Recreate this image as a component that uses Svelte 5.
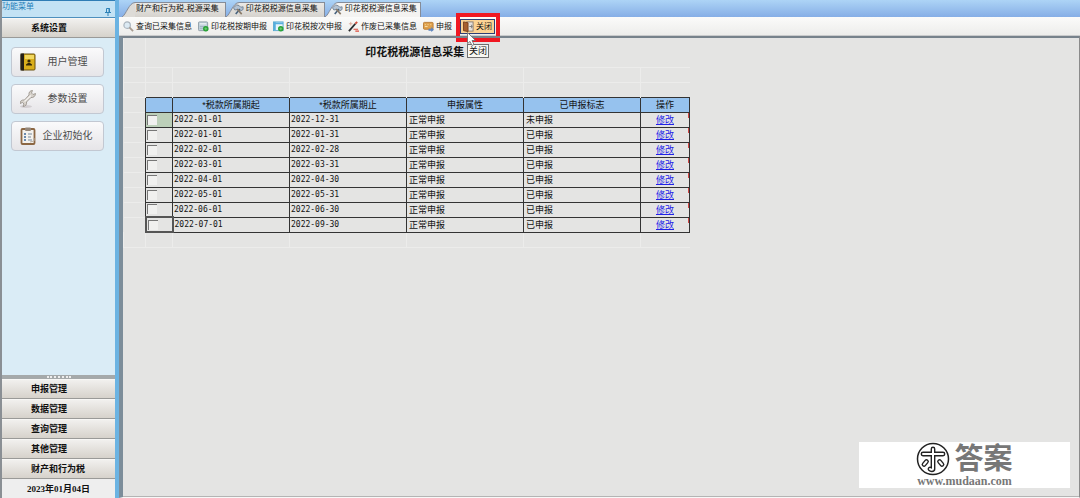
<script lang="ts">
  type Row = { start: string; end: string; kind: string; flag: string; checked: boolean };

  const tabs = [
    { title: '财产和行为税-税源采集', icon: false },
    { title: '印花税税源信息采集', icon: true },
    { title: '印花税税源信息采集', icon: true }
  ];
  let activeTab = $state(2);

  const menus = [
    { label: '用户管理', icon: 'book' },
    { label: '参数设置', icon: 'wrench' },
    { label: '企业初始化', icon: 'clipboard' }
  ];

  const groups = ['申报管理', '数据管理', '查询管理', '其他管理', '财产和行为税'];

  const tools = [
    { label: '查询已采集信息', icon: 'search' },
    { label: '印花税按期申报', icon: 'period' },
    { label: '印花税按次申报', icon: 'once' },
    { label: '作废已采集信息', icon: 'wand' },
    { label: '申报', icon: 'send' }
  ];

  const columns = ['*税款所属期起', '*税款所属期止', '申报属性', '已申报标志', '操作'];

  const rows: Row[] = $state(
    [
      ['2022-01-01', '2022-12-31', '未申报'],
      ['2022-01-01', '2022-01-31', '已申报'],
      ['2022-02-01', '2022-02-28', '已申报'],
      ['2022-03-01', '2022-03-31', '已申报'],
      ['2022-04-01', '2022-04-30', '已申报'],
      ['2022-05-01', '2022-05-31', '已申报'],
      ['2022-06-01', '2022-06-30', '已申报'],
      ['2022-07-01', '2022-09-30', '已申报']
    ].map(([start, end, flag]) => ({ start, end, flag, kind: '正常申报', checked: false }))
  );
</script>

{#snippet icon(name: string)}
  {#if name === 'book'}
    <svg class="menu-icon" viewBox="0 0 16 18">
      <rect x="1" y="1" width="14" height="16" rx="1" fill="#d9ae1c" stroke="#6b5310" />
      <rect x="0.5" y="0.5" width="3.5" height="17" fill="#252018" />
      <rect x="5" y="2" width="9" height="4" fill="#f2d860" />
      <circle cx="9" cy="8" r="1.6" fill="#322708" />
      <path d="M6 12.5h6v-1l-2-1.5h-2l-2 1.5z" fill="#322708" />
    </svg>
  {:else if name === 'wrench'}
    <svg class="menu-icon" viewBox="0 0 16 18">
      <ellipse cx="6" cy="16.5" rx="6" ry="1.5" fill="#d2ced1" />
      <path d="M15.500 3.500l-2.500 1-1.500-1.500 1-2.500c-2.500 0-4 2-3.500 4.500L4.500 10c-2.500-.5-4.500 1-4.500 3.500l2.500-1 1.500 1.500-1 2.500c2.500 0 4-2 3.500-4.500L11 7.500c2.500.5 4.500-1.500 4.500-4z" fill="#d6d1ca" stroke="#938d85" stroke-width="0.8" />
      <path d="M4.500 11.500l6.500-6" stroke="#f4f2ef" stroke-width="1.2" />
    </svg>
  {:else if name === 'clipboard'}
    <svg class="menu-icon" viewBox="0 0 16 18">
      <rect x="1.5" y="2" width="13" height="15" rx="1" fill="#f4f2ee" stroke="#8c6743" stroke-width="1.8" />
      <rect x="5" y="0.5" width="6" height="3.5" rx="1" fill="#94877b" />
      <path d="M4 7h2m-2 3h2m-2 3h2" stroke="#3e699b" stroke-width="1.5" />
      <path d="M8 7h4m-4 3h3m-3 3h4" stroke="#77899c" />
      <path d="M10 15l4-1v-3" fill="none" stroke="#b9b0a5" />
    </svg>
  {:else if name === 'search'}
    <svg class="tool-icon" viewBox="0 0 12 12">
      <circle cx="4.5" cy="4.5" r="3.5" fill="#dceaf3" stroke="#a9b3bc" stroke-width="1.3" />
      <path d="M7 7l4 4" stroke="#a79b90" stroke-width="2" />
    </svg>
  {:else if name === 'period'}
    <svg class="tool-icon" viewBox="0 0 12 12">
      <rect x="0.5" y="1" width="10" height="9.5" rx="1" fill="#c3d2dc" stroke="#8c9ba5" />
      <path d="M2 3h7" stroke="#e8eef2" stroke-width="1.5" />
      <path d="M2 6h7M2 8h5" stroke="#9fb3c1" />
      <circle cx="8.5" cy="8.5" r="3" fill="#28a336" />
      <path d="M8.5 7v3M7 8.5h3" stroke="#79cf7c" />
    </svg>
  {:else if name === 'once'}
    <svg class="tool-icon" viewBox="0 0 12 12">
      <rect x="0.5" y="1" width="10.5" height="9.5" fill="#e8f4fa" stroke="#58a9cf" />
      <path d="M1 2.5h10M2 1v9" stroke="#57aede" stroke-width="2" />
      <circle cx="8.5" cy="8.5" r="3" fill="#28a336" />
      <path d="M8.5 7v3M7 8.5h3" stroke="#79cf7c" />
    </svg>
  {:else if name === 'wand'}
    <svg class="tool-icon" viewBox="0 0 12 12">
      <path d="M1 11l7-8" stroke="#292b2d" stroke-width="2" />
      <path d="M8 3l2-2" stroke="#d04b3b" stroke-width="2" />
      <path d="M3 1v4M1 3h4" stroke="#d79a88" stroke-width="0.8" />
      <path d="M6 9h5M8 11h4" stroke="#dc4838" stroke-width="1.3" />
    </svg>
  {:else if name === 'send'}
    <svg class="tool-icon" viewBox="0 0 12 12">
      <rect x="0.5" y="1.5" width="10.5" height="7.5" rx="1" fill="#dfa14c" stroke="#b87a32" />
      <path d="M2 4h1m2 0h1m2 0h1M2 6h3" stroke="#fae1ad" />
      <path d="M6 8.5h3v-2l3 3-3 2.500v-1.500H6z" fill="#5f85bd" />
    </svg>
  {:else if name === 'door'}
    <svg class="tool-icon" viewBox="0 0 12 12">
      <rect x="4" y="1" width="7" height="10" fill="#e9e4df" stroke="#857970" />
      <path d="M0.5 1l5 1v9.5l-5-1z" fill="#a8602f" stroke="#79401b" />
      <path d="M7 6h3m-1-2l1 2-1 2" fill="none" stroke="#777" />
    </svg>
  {:else if name === 'tab'}
    <svg class="tool-icon" viewBox="0 0 12 12">
      <path d="M0.5 4l3.500-3 3 1 1.500 1.500L11 3v3L8.500 7.500 5 6 2 6.500z" fill="#b3c3d4" stroke="#5f7286" stroke-width="0.8" />
      <path d="M3 11l4.500-5.500" stroke="#48647f" stroke-width="1.8" />
      <path d="M4.500 5.500l5 5.500" stroke="#8a7a68" stroke-width="1.8" />
    </svg>
  {/if}
{/snippet}

<div class="app">
  <aside class="sidebar">
    <div class="panel-title">
      <span>功能菜单</span>
      <svg class="pin" viewBox="0 0 6 8">
        <path d="M1.5 0.5h3v4h-3zM0 4.500h6M3 4.500V8" fill="none" stroke="#2e82b8" />
        <path d="M4 0v4" stroke="#2e82b8" />
      </svg>
    </div>
    <button type="button" class="group">系统设置</button>
    <div class="menu">
      {#each menus as item}
        <button type="button" class="menu-item">
          {@render icon(item.icon)}
          <span>{item.label}</span>
        </button>
      {/each}
    </div>
    <div class="splitter"><i></i></div>
    {#each groups as group}
      <button type="button" class="group">{group}</button>
    {/each}
    <div class="date">2023年01月04日</div>
  </aside>

  <main class="main">
    <div class="tabs">
      {#each tabs as tab, i}
        <button type="button" class="tab" class:active={i === activeTab} onclick={() => (activeTab = i)}>
          <svg class="slope" viewBox="0 0 13 15">
            <path class="slope-fill" d="M0 15C4 13 7 0.5 13 0.5V15z" />
            <path d="M0 15C4 13 7 0.5 13 0.5" fill="none" stroke="#858c98" />
          </svg>
          <span class="tab-body" class:with-icon={tab.icon}>
            {#if tab.icon}{@render icon('tab')}{/if}
            {tab.title}
          </span>
        </button>
      {/each}
    </div>

    <div class="toolbar">
      {#each tools as tool}
        <button type="button" class="tool">
          {@render icon(tool.icon)}
          {tool.label}
        </button>
      {/each}
      <div class="close-wrap">
        <button type="button" class="tool close">
          {@render icon('door')}
          关闭
        </button>
        <span class="marker"></span>
        <span class="tooltip">关闭</span>
        <svg class="cursor" viewBox="0 0 9 14">
          <path d="M0.5 0.5v11l2.500-2 2 4 2-1-2-4h3.500z" fill="#fff" stroke="#666" stroke-width="0.8" />
        </svg>
      </div>
    </div>

    <div class="content">
      <table class="sheet">
        <colgroup>
          <col class="col-gutter" />
          <col class="col-check" />
          <col class="col-data" />
          <col class="col-data" />
          <col class="col-data" />
          <col class="col-data" />
          <col class="col-action" />
        </colgroup>
        <thead>
          <tr class="title-row">
            <td></td>
            <th colspan="6">印花税税源信息采集</th>
          </tr>
          {#each [0, 1] as _}
            <tr class="blank">
              {#each Array(7) as _}<td></td>{/each}
            </tr>
          {/each}
          <tr class="head">
            <td class="gutter"></td>
            <th></th>
            {#each columns as column}
              <th>{column}</th>
            {/each}
          </tr>
        </thead>
        <tbody>
          {#each rows as row, i}
            <tr class="data">
              <td class="gutter"></td>
              <td class="check" class:current={i === 0} class:focused={i === rows.length - 1}>
                <input type="checkbox" aria-label="选择 {row.start}" bind:checked={row.checked} />
              </td>
              <td class="day">{row.start}</td>
              <td class="day">{row.end}</td>
              <td>{row.kind}</td>
              <td>{row.flag}</td>
              <td class="action"><a href="#edit">修改</a></td>
            </tr>
          {/each}
        </tbody>
        <tfoot>
          <tr class="blank last">
            {#each Array(7) as _}<td></td>{/each}
          </tr>
        </tfoot>
      </table>

      <div class="watermark">
        <div class="brand">
          <svg class="logo" viewBox="0 0 34 34">
            <circle cx="17" cy="17" r="15.5" fill="#fff" stroke="#222" stroke-width="1.5" />
            <g fill="none" stroke-linecap="round" stroke-linejoin="round">
              <path d="M7 12h20M17 7v20c0 1-2 1-3 0M10.500 19.500l-2.500 3M23.500 19.500l2.500 3" stroke="#222" stroke-width="4.8" />
              <path d="M7 12h20M17 7v20c0 1-2 1-3 0M10.500 19.500l-2.500 3M23.500 19.500l2.500 3" stroke="#fff" stroke-width="2" />
            </g>
          </svg>
          <span>答案</span>
        </div>
        <div class="site">www.mudaan.com</div>
      </div>
    </div>
  </main>
</div>

<style>
  :global(body) {
    margin: 0;
  }

  .app {
    display: flex;
    min-height: 100vh;
    font-family: "Liberation Sans", "Noto Sans CJK SC", sans-serif;
    font-size: 8px;
    line-height: 12px;
    color: #111;
    background: #e4e4e3;
  }

  button {
    font: inherit;
    color: inherit;
    margin: 0;
    padding: 0;
    border: none;
    background: none;
    white-space: nowrap;
  }

  svg {
    display: block;
    flex-shrink: 0;
  }

  /* sidebar */
  .sidebar {
    box-sizing: border-box;
    width: 119px;
    flex-shrink: 0;
    display: flex;
    flex-direction: column;
    border-left: 2px solid #8a8f94;
    border-right: 4px solid #6bb3e2;
    background: #daecf6;
  }

  .panel-title {
    box-sizing: border-box;
    height: 18px;
    display: flex;
    justify-content: space-between;
    border-top: 1px solid #2f7db5;
    border-bottom: 1px solid #4e8fbd;
    background: #c3e2f4;
    color: #2580b9;
  }

  .pin {
    width: 6px;
    height: 8px;
    margin: 7px 4px 0 0;
  }

  .group {
    box-sizing: border-box;
    height: 20px;
    padding-left: 29px;
    text-align: left;
    font-size: 9px;
    font-weight: bold;
    border-top: 1px solid #f8f7f5;
    border-bottom: 1px solid #9a9a98;
    background: linear-gradient(#f1f0ee, #d6d2cb);
  }

  .menu {
    flex: 1;
    display: flex;
    flex-direction: column;
    gap: 7px;
    padding: 9px 11px 0 9px;
  }

  .menu-item {
    box-sizing: border-box;
    height: 30px;
    display: flex;
    align-items: center;
    padding: 0 4px 0 8px;
    border: 1px solid #c2c8d2;
    border-radius: 4px;
    background: linear-gradient(#fafafb, #e6e5e8);
    font-size: 10px;
    color: #4c4c4c;
  }

  .menu-item span {
    flex: 1;
    text-align: center;
  }

  .menu-icon {
    width: 16px;
    height: 18px;
  }

  .splitter {
    height: 4px;
    display: flex;
    justify-content: center;
    align-items: center;
    background: #a5a9aa;
  }

  .splitter i {
    width: 24px;
    border-top: 2px dotted #eee;
  }

  .date {
    height: 19px;
    line-height: 20px;
    font-family: "Liberation Serif", "Noto Sans CJK SC", serif;
    font-size: 9px;
    font-weight: bold;
    text-align: center;
    background: #eeeeee;
  }

  /* tabs */
  .main {
    flex: 1;
    min-width: 0;
    display: flex;
    flex-direction: column;
  }

  .tabs {
    display: flex;
    height: 15px;
    padding: 2px 0 0 3px;
    background: linear-gradient(#add4f6, #86aee6);
  }

  .tab {
    display: flex;
    height: 15px;
  }

  .slope {
    width: 13px;
    height: 15px;
  }

  .slope-fill {
    fill: #dddbd7;
  }

  .active .slope-fill {
    fill: #f4f3f1;
  }

  .tab-body {
    box-sizing: border-box;
    height: 15px;
    display: flex;
    align-items: center;
    gap: 2px;
    padding: 0 6px 2px 1px;
    border-top: 1px solid #858c98;
    border-right: 1px solid #858c98;
    background: linear-gradient(#eae9e6, #d6d3ce);
  }

  .active .tab-body {
    background: #f4f3f1;
    padding-right: 3px;
  }

  .with-icon {
    padding-left: 0;
  }

  .with-icon :global(.tool-icon) {
    margin-left: -6px;
  }

  /* toolbar */
  .toolbar {
    box-sizing: border-box;
    height: 19px;
    display: flex;
    align-items: center;
    gap: 6px;
    padding: 1px 0 0 4px;
    border-bottom: 1px solid #c9cacb;
    background: linear-gradient(#fbfbfa, #ededeb);
  }

  .tool {
    display: flex;
    align-items: center;
    gap: 2px;
  }

  .tool-icon {
    width: 11px;
    height: 11px;
  }

  .close-wrap {
    position: relative;
    margin-left: 2px;
  }

  .close {
    box-sizing: border-box;
    height: 15px;
    padding: 0 2px;
    border: 1px solid #2d3f76;
    background: #fbd394;
  }

  .marker {
    position: absolute;
    inset: -6px -5px -8px -4px;
    border: 4px solid #f01822;
    pointer-events: none;
  }

  .tooltip {
    position: absolute;
    top: 25px;
    left: 7px;
    padding: 0 1px;
    border: 1px solid #6f6f6f;
    background: #f7f7f2;
    font-size: 9px;
    white-space: nowrap;
    z-index: 1;
  }

  .cursor {
    position: absolute;
    top: 13px;
    left: 7px;
    width: 9px;
    height: 14px;
    z-index: 2;
  }

  /* sheet */
  .content {
    flex: 1;
    position: relative;
    border: 1px solid #8b8b8b;
    border-top: 2px solid #77828b;
    border-left: 4px solid #7c8d9a;
    border-bottom-color: #f8f8f8;
    box-shadow: inset 0 -1px #b4b4b4;
  }

  .sheet {
    table-layout: fixed;
    width: 566px;
    border-collapse: collapse;
  }

  .col-gutter {
    width: 22px;
  }

  .col-check {
    width: 27px;
  }

  .col-data {
    width: 117px;
  }

  .col-action {
    width: 49px;
  }

  .sheet td,
  .sheet th {
    box-sizing: border-box;
    height: 15px;
    padding: 0 2px;
    text-align: left;
    font-size: 9px;
  }

  .title-row td,
  .title-row th {
    height: 29px;
    border-left: 1px solid #ececeb;
  }

  .sheet .title-row th {
    padding-right: 8px;
    font-size: 11px;
    text-align: center;
  }

  .blank td {
    border-top: 1px solid #ececeb;
    border-left: 1px solid #ececeb;
  }

  .last td {
    border-top: none;
    border-bottom: 1px solid #ececeb;
  }

  .sheet .gutter {
    border: none;
    border-top: 1px solid #ececeb;
  }

  .head th,
  .data td {
    border: 1px solid #333;
  }

  .sheet .head th {
    background: #96c2ee;
    font-weight: normal;
    text-align: center;
  }

  .sheet .day {
    padding-left: 1px;
    font-family: "DejaVu Sans Mono", monospace;
    font-size: 8px;
  }

  .check input {
    appearance: none;
    display: block;
    width: 10px;
    height: 10px;
    margin: 0;
    border-top: 1px solid #777;
    border-left: 1px solid #777;
    background: #f0f0ef;
  }

  .check input:checked {
    background: #5a7fb5;
  }

  .sheet .check {
    padding: 0 1px;
  }

  .sheet .current {
    background: #bccfb9;
  }

  .sheet .focused {
    border: 2px solid #555;
  }

  .sheet .action {
    text-align: center;
    background: linear-gradient(#c44, #c44) right top / 1px 5px no-repeat;
  }

  .action a {
    color: #2222e8;
  }

  .watermark {
    position: absolute;
    right: 9px;
    bottom: 9px;
    width: 211px;
    height: 46px;
    display: flex;
    flex-direction: column;
    align-items: center;
    background: #fff;
    color: #777;
  }

  .brand {
    display: flex;
    align-items: center;
    gap: 4px;
    height: 34px;
    font-size: 29px;
    line-height: 34px;
    font-weight: bold;
  }

  .logo {
    width: 34px;
    height: 34px;
  }

  .site {
    font-family: "Liberation Serif", serif;
    font-size: 12px;
    line-height: 10px;
    font-weight: bold;
  }
</style>
